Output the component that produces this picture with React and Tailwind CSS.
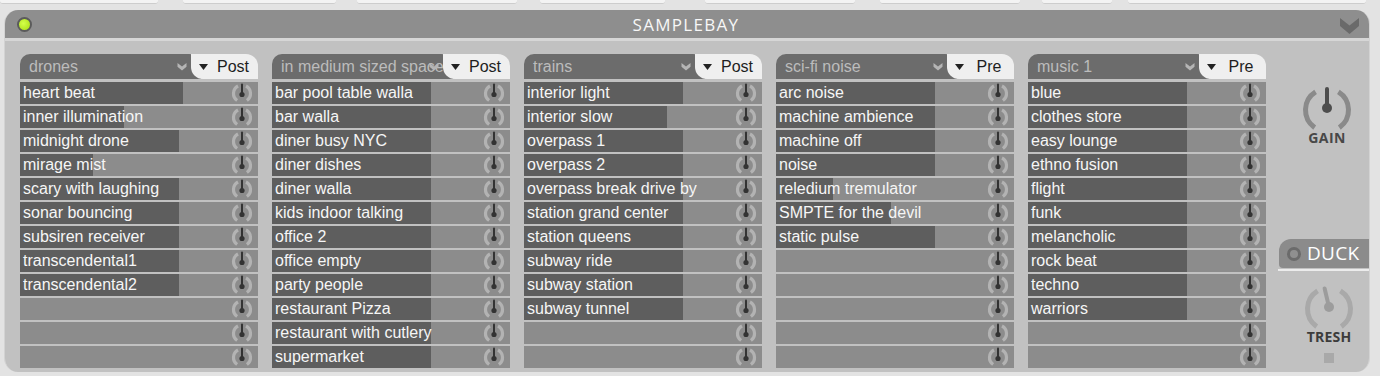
import React from "react";

const FULL = 159;
const cols = [
  {
    name: "drones",
    mode: "Post",
    rows: [
      ["heart beat", 163],
      ["inner illumination", 104],
      ["midnight drone", FULL],
      ["mirage mist", 73],
      ["scary with laughing", FULL],
      ["sonar bouncing", FULL],
      ["subsiren receiver", FULL],
      ["transcendental1", FULL],
      ["transcendental2", FULL],
    ],
  },
  {
    name: "in medium sized spaces",
    mode: "Post",
    rows: [
      ["bar pool table walla", FULL],
      ["bar walla", FULL],
      ["diner busy NYC", FULL],
      ["diner dishes", FULL],
      ["diner walla", FULL],
      ["kids indoor talking", FULL],
      ["office 2", FULL],
      ["office empty", FULL],
      ["party people", FULL],
      ["restaurant Pizza", FULL],
      ["restaurant with cutlery", FULL],
      ["supermarket", FULL],
    ],
  },
  {
    name: "trains",
    mode: "Post",
    rows: [
      ["interior light", FULL],
      ["interior slow", 143],
      ["overpass 1", FULL],
      ["overpass 2", FULL],
      ["overpass break drive by", FULL],
      ["station grand center", FULL],
      ["station queens", FULL],
      ["subway ride", FULL],
      ["subway station", FULL],
      ["subway tunnel", FULL],
    ],
  },
  {
    name: "sci-fi noise",
    mode: "Pre",
    rows: [
      ["arc noise", FULL],
      ["machine ambience", FULL],
      ["machine off", FULL],
      ["noise", FULL],
      ["reledium tremulator", 57],
      ["SMPTE for the devil", 115],
      ["static pulse", FULL],
    ],
  },
  {
    name: "music 1",
    mode: "Pre",
    rows: [
      ["blue", FULL],
      ["clothes store", FULL],
      ["easy lounge", FULL],
      ["ethno fusion", FULL],
      ["flight", FULL],
      ["funk", FULL],
      ["melancholic", FULL],
      ["rock beat", FULL],
      ["techno", FULL],
      ["warriors", FULL],
    ],
  },
];

function pt(cx, cy, r, deg) {
  const a = (deg * Math.PI) / 180;
  return [cx + r * Math.sin(a), cy - r * Math.cos(a)];
}
function arc(cx, cy, r, a1, a2) {
  const [x1, y1] = pt(cx, cy, r, a1);
  const [x2, y2] = pt(cx, cy, r, a2);
  return `M${x1.toFixed(2)} ${y1.toFixed(2)} A${r} ${r} 0 0 1 ${x2.toFixed(2)} ${y2.toFixed(2)}`;
}

function SmallKnob() {
  return (
    <svg width="24" height="22" viewBox="0 0 24 22" className="shrink-0">
      <path d={arc(12, 11.5, 8.5, 215, 332)} stroke="#b3b3b3" strokeWidth="3.2" fill="none" />
      <path d={arc(12, 11.5, 8.5, 28, 145)} stroke="#b3b3b3" strokeWidth="3.2" fill="none" />
      <line x1="12" y1="12.5" x2="12" y2="2.5" stroke="#333" strokeWidth="2" strokeLinecap="round" />
      <circle cx="12" cy="12.5" r="2.6" fill="#333" />
    </svg>
  );
}

function BigKnob({ light, angle = 0 }) {
  const arcC = light ? "#a9a9a9" : "#8a8a8a";
  const ptrC = light ? "#9c9c9c" : "#4d4d4d";
  const [tx, ty] = pt(26, 25, 21, angle);
  return (
    <svg width="52" height="48" viewBox="0 0 52 48">
      <path d={arc(26, 25, 21.5, 215, 328)} stroke={arcC} strokeWidth="5" fill="none" />
      <path d={arc(26, 25, 21.5, 32, 145)} stroke={arcC} strokeWidth="5" fill="none" />
      <line x1="26" y1="23" x2={tx.toFixed(2)} y2={ty.toFixed(2)} stroke={ptrC} strokeWidth="4" strokeLinecap="round" />
      <circle cx="26" cy="23" r="5" fill={ptrC} />
    </svg>
  );
}

function Chevron({ w, h, color }) {
  return (
    <svg width={w} height={h} viewBox="0 0 18 18" className="shrink-0">
      <path d="M0 2 L9 9 L18 2 L18 9.5 L9 17 L0 9.5 Z" fill={color} />
    </svg>
  );
}

function Row({ text, w }) {
  const bg = `linear-gradient(to right, #5e5e5e ${w}px, #8c8c8c ${w}px)`;
  return (
    <div className="flex h-[22px] items-center pr-[4px]" style={{ background: bg }}>
      <span className="min-w-0 flex-1 whitespace-nowrap pl-[3px] text-[16px] leading-[22px] text-[#f6f6f6]">
        {text}
      </span>
      <SmallKnob />
    </div>
  );
}

function Column({ col }) {
  const rows = [...col.rows];
  while (rows.length < 12) rows.push(["", 0]);
  return (
    <div className="flex w-[238px] shrink-0 flex-col">
      <div className="flex h-[25px]">
        <div className="flex min-w-0 flex-1 items-center rounded-tl-[10px] rounded-tr-[12px] bg-[#6c6c6c] pl-[9px] pr-[14px]">
          <span className="min-w-0 flex-1 whitespace-nowrap text-[16px] leading-none text-[#bcbcbc]">
            {col.name}
          </span>
          <div className="relative -ml-[6px]">
            <Chevron w={10} h={9} color="#b5b5b5" />
          </div>
        </div>
        <div className="relative -ml-[10px] flex w-[67px] shrink-0 items-center rounded-bl-[12px] rounded-tr-[12px] bg-[#efefef] pl-[8px]">
          <svg width="9" height="6" viewBox="0 0 9 6" className="shrink-0">
            <path d="M0 0 L9 0 L4.5 6 Z" fill="#222" />
          </svg>
          <span className="flex-1 text-center text-[16px] leading-none text-[#1e1e1e]">{col.mode}</span>
        </div>
      </div>
      <div className="mt-[3px] flex flex-col gap-[2px]">
        {rows.map(([t, w], i) => (
          <Row key={i} text={t} w={w} />
        ))}
      </div>
    </div>
  );
}

export default function App() {
  const tops = [
    [0, 158],
    [183, 153],
    [357, 160],
    [540, 125],
    [705, 150],
    [880, 140],
    [1042, 70],
    [1128, 238],
  ];
  return (
    <div className="h-[376px] w-[1380px] overflow-hidden bg-[#e3e3e3] font-['Liberation_Sans',Arial,sans-serif]">
      <div className="relative h-[10px]">
        <div className="flex h-[4px]">
          {tops.map(([x, w], i) => (
            <div
              key={i}
              className="h-[4px] rounded-b-[3px] border-b border-[#cdcdcd] bg-[#f3f3f3]"
              style={{ marginLeft: i === 0 ? x : x - (tops[i - 1][0] + tops[i - 1][1]), width: w }}
            />
          ))}
        </div>
      </div>
      <div className="ml-[4px] flex h-[362px] w-[1366px] flex-col overflow-hidden rounded-[14px] border-x border-[#d3d3d3]">
        <div className="flex h-[28px] shrink-0 items-center bg-[#8e8e8e] pl-[12px] pr-[10px]">
          <div className="h-[15px] w-[15px] rounded-full border-[2px] border-[#5b5b5b] bg-[radial-gradient(circle_at_40%_40%,#d4ff4a,#a6db12)]" />
          <div className="flex-1 text-center font-['Open_Sans',sans-serif] text-[17px] leading-none tracking-[1.3px] text-[#f7f7f7]">
            SAMPLEBAY
          </div>
          <div className="pt-[2px]">
            <Chevron w={19} h={19} color="#6a6a6a" />
          </div>
        </div>
        <div className="h-[3px] shrink-0 bg-[#d6d6d6]" />
        <div className="flex flex-1 bg-[#c1c1c1] pl-[15px] pt-[13px]">
          <div className="flex gap-[14px]">
            {cols.map((c, i) => (
              <Column key={i} col={c} />
            ))}
          </div>
          <div className="flex w-[105px] shrink-0 flex-col pt-[31px] font-['Open_Sans',sans-serif]">
            <div className="ml-[35px] flex w-[52px] flex-col items-center">
              <BigKnob />
              <div className="-mt-[2px] text-[14px] font-bold leading-none tracking-[0.4px] text-[#484848]">GAIN</div>
            </div>
            <div className="ml-[13px] mt-[94px] flex h-[29px] w-[92px] items-center gap-[6px] rounded-tl-[12px] rounded-bl-[4px] bg-[#8b8b8b] pl-[8px]">
              <div className="h-[14px] w-[14px] rounded-full border-[3px] border-[#6b6b6b] bg-[#8f8f8f]" />
              <span className="text-[19px] leading-none tracking-[0.3px] text-white">DUCK</span>
            </div>
            <div className="ml-[12px] mt-[1px] h-[2px] w-[93px] bg-[#ececec]" />
            <div className="ml-[37px] mt-[13px] flex w-[52px] flex-col items-center">
              <BigKnob light angle={-12} />
              <div className="-mt-[2px] text-[14px] font-bold leading-none tracking-[0.2px] text-[#3c3c3c]">TRESH</div>
              <div className="mt-[9px] h-[10px] w-[10px] bg-[#a9a9a9]" />
            </div>
          </div>
        </div>
      </div>
    </div>
  );
}
